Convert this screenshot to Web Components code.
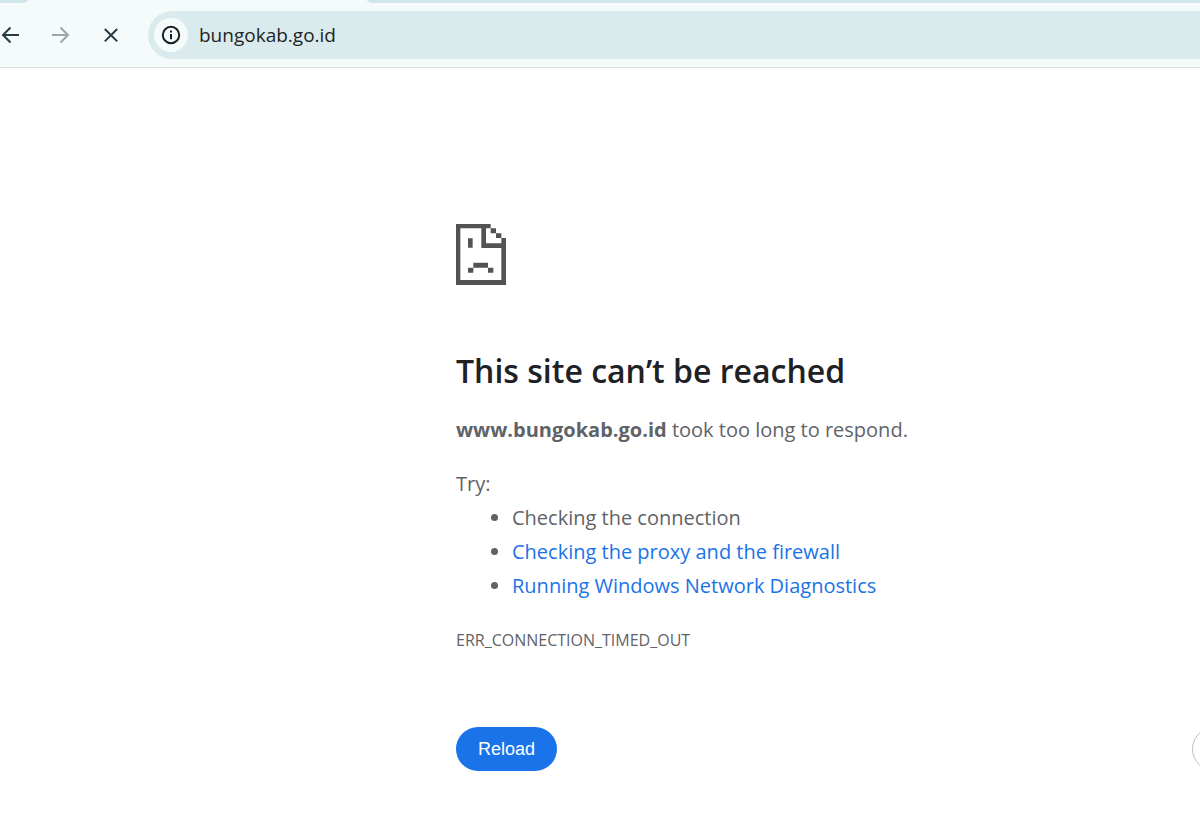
<!DOCTYPE html>
<html lang="en">
<head>
<meta charset="utf-8">
<meta name="viewport" content="width=device-width, initial-scale=1">
<title>bungokab.go.id</title>
<style>
    body {
        margin: 0;
        background: #fff;
        font-family: "Open Sans", "Noto Sans", sans-serif;
        font-size: 20px;
        color: #5f6368;
    }
</style>
</head>
<body>
<browser-toolbar url="bungokab.go.id"></browser-toolbar>
<error-page>
    <span slot="title">This site can’t be reached</span>
    <span slot="summary"><strong>www.bungokab.go.id</strong> took too long to respond.</span>
    <suggestion-list slot="suggestions"></suggestion-list>
    <span slot="code">ERR_CONNECTION_TIMED_OUT</span>
</error-page>

<script>
/* Tab strip edge, navigation buttons and address bar */
class BrowserToolbar extends HTMLElement {
    constructor() {
        super();
        this.attachShadow({ mode: 'open' });
    }

    connectedCallback() {
        const url = this.getAttribute('url') || '';
        this.shadowRoot.innerHTML = `
            <style>
                :host {
                    display: block;
                    background: #f5fbfb;
                    border-bottom: 1px solid #dae4e6;
                    overflow: hidden;
                }

                .tabs {
                    display: flex;
                    justify-content: space-between;
                    height: 3px;
                }

                .tab {
                    background: #cfe6ec;
                }

                .tab.before {
                    width: 28px;
                    border-bottom-right-radius: 6px 3px;
                }

                .tab.after {
                    flex: 1;
                    margin-left: 339px;
                    border-bottom-left-radius: 6px 3px;
                }

                .bar {
                    display: flex;
                    align-items: center;
                    padding: 8px 0;
                }

                button {
                    display: grid;
                    place-items: center;
                    flex: none;
                    padding: 0;
                    border: 0;
                    background: none;
                    color: #263c44;
                }

                .nav {
                    display: flex;
                    gap: 10px;
                    margin-left: -9px;
                    margin-right: 17px;
                }

                .nav button {
                    width: 40px;
                    height: 40px;
                }

                .nav button:disabled {
                    color: #9fa6a8;
                }

                .address {
                    display: flex;
                    flex: 1;
                    align-items: center;
                    gap: 11px;
                    height: 48px;
                    padding-left: 6px;
                    border-radius: 24px 0 0 24px;
                    background: #daebed;
                }

                .info {
                    width: 34px;
                    height: 34px;
                    border-radius: 50%;
                    background: #f5fbfb;
                    color: #1b1f20;
                }

                input {
                    flex: 1;
                    min-width: 0;
                    padding: 0;
                    border: 0;
                    outline: 0;
                    background: none;
                    font: inherit;
                    font-size: 19px;
                    color: #1f2425;
                }

                svg {
                    display: block;
                    fill: none;
                    stroke: currentColor;
                    stroke-width: 2;
                }
            </style>

            <div class="tabs">
                <div class="tab before"></div>
                <div class="tab after"></div>
            </div>
            <div class="bar">
                <div class="nav">
                    <button type="button" aria-label="Back">
                        <svg width="20" height="20" viewBox="0 0 20 20"><path d="M18 10H2M9.5 2.5L2 10L9.5 17.5"/></svg>
                    </button>
                    <button type="button" aria-label="Forward" disabled>
                        <svg width="20" height="20" viewBox="0 0 20 20"><path d="M1 10H17M9.5 2.5L17 10L9.5 17.5"/></svg>
                    </button>
                    <button type="button" aria-label="Stop">
                        <svg width="20" height="20" viewBox="0 0 20 20"><path d="M3.8 4L16.2 16.4M16.2 4L3.8 16.4"/></svg>
                    </button>
                </div>
                <div class="address">
                    <button class="info" type="button" aria-label="View site information">
                        <svg width="20" height="20" viewBox="0 0 20 20"><circle cx="10" cy="10" r="8.2"/><path d="M10 9V14.3M10 5.5V7.5"/></svg>
                    </button>
                    <input type="text" aria-label="Address" spellcheck="false" value="${url}">
                </div>
            </div>
        `;
    }
}

/* Pixelated page with a sad face */
class SadPageIcon extends HTMLElement {
    constructor() {
        super();
        this.attachShadow({ mode: 'open' });
        this.shadowRoot.innerHTML = `
            <style>
                :host { display: block; }
                svg { display: block; }
            </style>
            <svg width="50" height="61" viewBox="0 0 150 183" fill="#535353" aria-hidden="true">
                <path d="M0 0H104V13H120V28H136V42H150V183H0ZM13 13V168H136V72H76V13ZM90 13V58H136V42H120V28H104V13Z" fill-rule="evenodd"/>
                <path d="M36 43H50V71H36ZM52 116H96V131H52ZM36 131H52V146H36ZM96 131H112V146H96Z"/>
            </svg>
        `;
    }
}

class SuggestionList extends HTMLElement {
    constructor() {
        super();
        this.attachShadow({ mode: 'open' });
        this.shadowRoot.innerHTML = `
            <style>
                :host {
                    display: block;
                    line-height: 34px;
                }

                p, ul {
                    margin: 0;
                }

                ul {
                    padding-left: 56px;
                }

                a {
                    color: #1a73e8;
                    text-decoration: none;
                }
            </style>
            <p>Try:</p>
            <ul>
                <li>Checking the connection</li>
                <li><a href="#proxy">Checking the proxy and the firewall</a></li>
                <li><a href="#diagnostics">Running Windows Network Diagnostics</a></li>
            </ul>
        `;
    }
}

class ErrorPage extends HTMLElement {
    constructor() {
        super();
        this.attachShadow({ mode: 'open' });
        this.shadowRoot.innerHTML = `
            <style>
                :host {
                    display: block;
                    overflow: hidden;
                    padding: 156px 0 56px 38%;
                }

                h1 {
                    margin: 64px 0 20px;
                    font-size: 32px;
                    line-height: 44px;
                    font-weight: 600;
                    color: #202124;
                }

                p {
                    margin: 0 0 20px;
                    line-height: 34px;
                }

                .code {
                    margin: 20px 0 70px;
                    font-size: 16px;
                }

                .buttons {
                    display: flex;
                    justify-content: space-between;
                    margin-right: -96px;
                }

                button {
                    height: 44px;
                    padding: 0 22px;
                    border: 0;
                    border-radius: 22px;
                    background: #1a73e8;
                    font: 18px "Liberation Sans", Arial, sans-serif;
                    color: #fff;
                }

                /* runs off the right edge of the window */
                .details {
                    width: 104px;
                    border: 1px solid #bdc1c6;
                    background: #fff;
                }
            </style>
            <sad-page-icon></sad-page-icon>
            <h1><slot name="title"></slot></h1>
            <p><slot name="summary"></slot></p>
            <slot name="suggestions"></slot>
            <p class="code"><slot name="code"></slot></p>
            <div class="buttons">
                <button type="button">Reload</button>
                <button class="details" type="button" aria-label="Details"></button>
            </div>
        `;
    }
}

customElements.define('browser-toolbar', BrowserToolbar);
customElements.define('sad-page-icon', SadPageIcon);
customElements.define('suggestion-list', SuggestionList);
customElements.define('error-page', ErrorPage);
</script>
</body>
</html>
